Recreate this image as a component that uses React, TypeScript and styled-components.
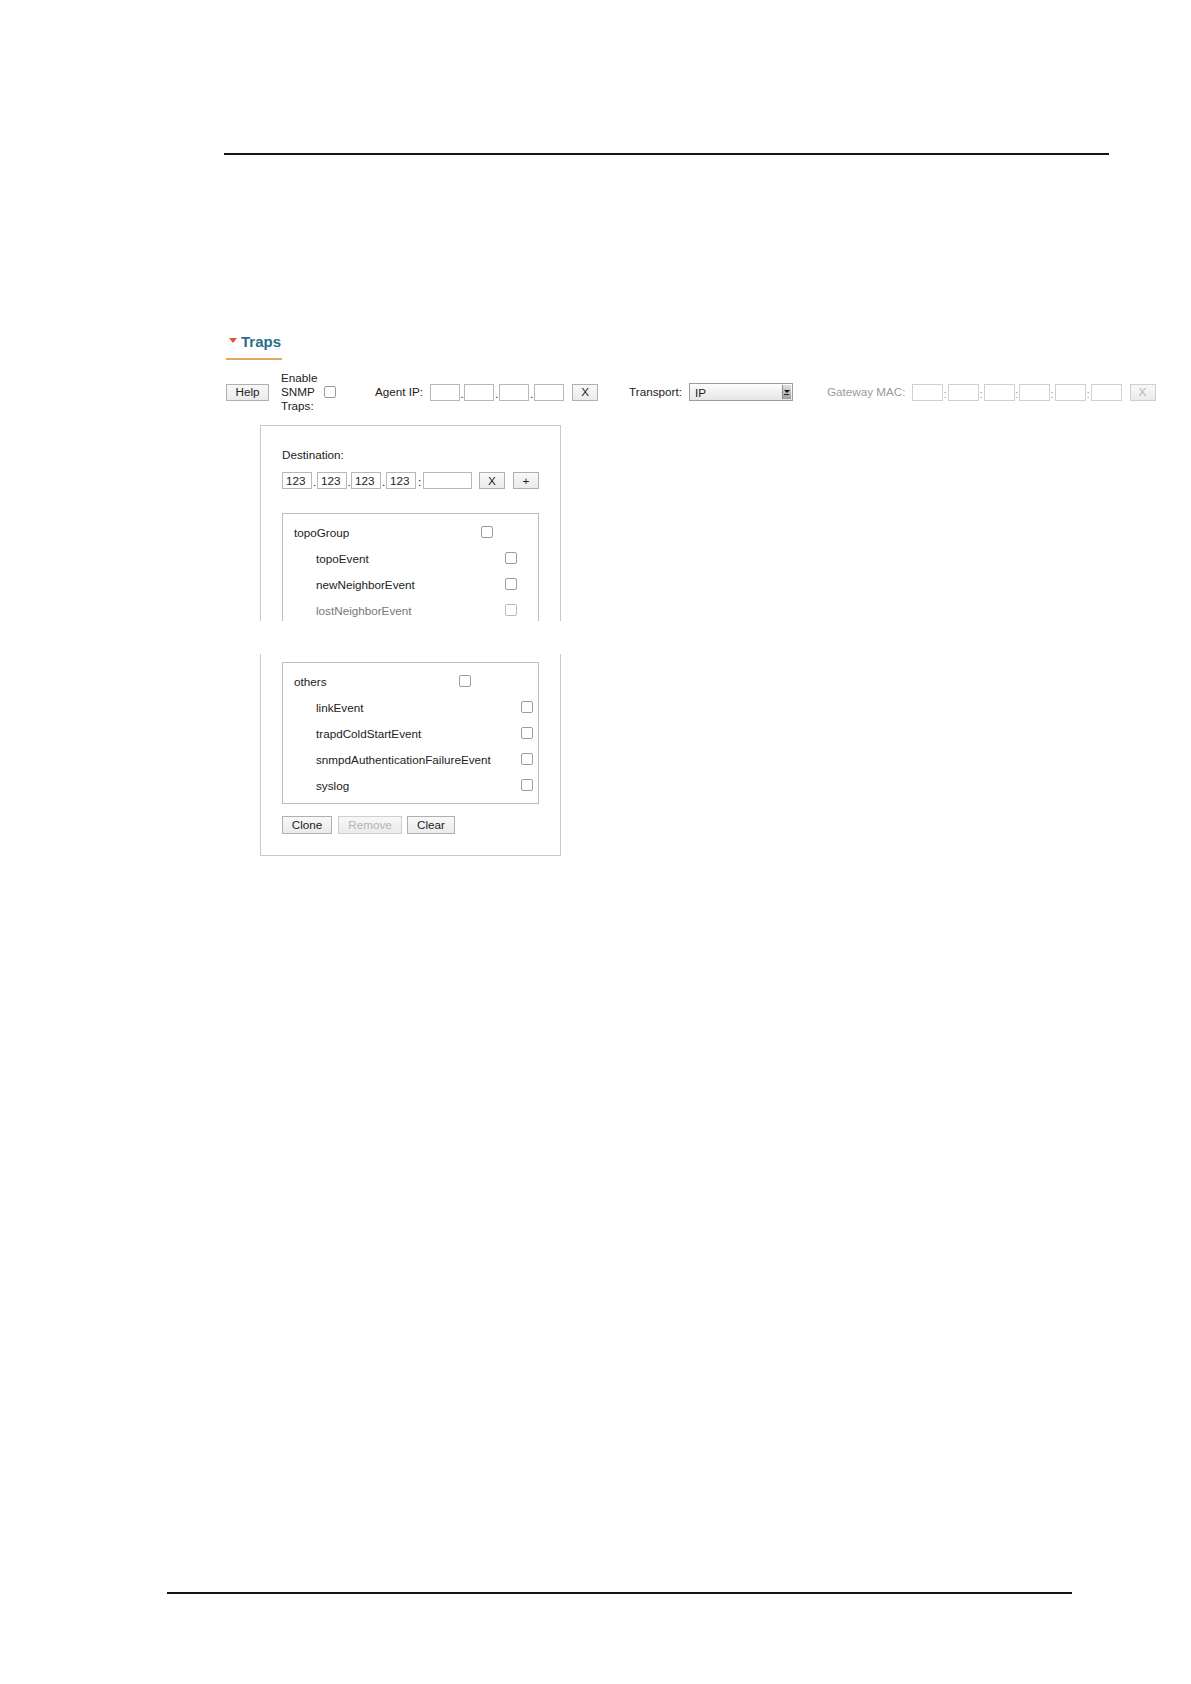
import styled, { createGlobalStyle } from "styled-components";

const GlobalStyle = createGlobalStyle`
  body {
    margin: 0;
    background: #fff;
    font-family: "Liberation Sans", Arial, sans-serif;
    color: #222;
  }
`;

const Page = styled.div`
  width: 1191px;
  height: 1684px;
  display: flex;
  flex-direction: column;
  overflow: hidden;
`;

const Rule = styled.div<{ $left: number; $width: number }>`
  margin-left: ${(p) => p.$left}px;
  width: ${(p) => p.$width}px;
  height: 2px;
  background: #151515;
`;

const TopRule = styled(Rule)`
  margin-top: 153px;
`;

const BottomRule = styled(Rule)`
  margin-top: auto;
  margin-bottom: 90px;
`;

const Section = styled.section`
  margin: 178px 0 0 226px;
  display: flex;
  flex-direction: column;
  align-items: flex-start;
  font-size: 11.7px;
`;

const Heading = styled.h3`
  margin: 0;
  display: flex;
  align-items: center;
  gap: 4px;
  width: 53px;
  padding: 0 0 7px 3px;
  border-bottom: 2px solid #e3a868;
  font-size: 15px;
  line-height: 18px;
  font-weight: bold;
  color: #2c6e88;
`;

const Caret = styled.span`
  width: 0;
  height: 0;
  margin-top: -3px;
  border-left: 4px solid transparent;
  border-right: 4px solid transparent;
  border-top: 5px solid #e2552e;
`;

const Toolbar = styled.div`
  margin-top: 11px;
  display: flex;
  align-items: center;
`;

const Group = styled.div<{ $ml?: number }>`
  display: flex;
  align-items: center;
  margin-left: ${(p) => p.$ml ?? 0}px;
`;

const Label = styled.span<{ $muted?: boolean }>`
  white-space: nowrap;
  line-height: 14px;
  color: ${(p) => (p.$muted ? "#9a9a9a" : "#222")};
`;

const EnableLabel = styled.span`
  width: 40px;
  line-height: 14px;
`;

const Button = styled.button<{ $w: number; $ml?: number; $muted?: boolean; $h?: number }>`
  width: ${(p) => p.$w}px;
  height: ${(p) => p.$h ?? 18}px;
  margin: 0 0 0 ${(p) => p.$ml ?? 0}px;
  padding: 0;
  border: 1px solid ${(p) => (p.$muted ? "#cfcfcf" : "#b0b0b0")};
  border-radius: 0;
  background: linear-gradient(#f8f8f8, #ebebeb);
  font-family: "Liberation Sans", Arial, sans-serif;
  font-size: 11.7px;
  line-height: 14px;
  color: ${(p) => (p.$muted ? "#b4b4b4" : "#222")};
`;

const Check = styled.input.attrs({ type: "checkbox" })<{ $ml?: number; $faded?: boolean }>`
  appearance: none;
  width: 12px;
  height: 12px;
  margin: 0 0 0 ${(p) => p.$ml ?? 0}px;
  border: 1px solid ${(p) => (p.$faded ? "#bcbcbc" : "#9c9c9c")};
  border-radius: 2px;
  background: #fff;
  flex: none;
`;

const Field = styled.input<{ $w: number; $muted?: boolean }>`
  width: ${(p) => p.$w}px;
  height: 17px;
  box-sizing: border-box;
  margin: 0;
  padding: 0 3px;
  border: 1px solid ${(p) => (p.$muted ? "#d0d0d0" : "#b8b8b8")};
  border-radius: 0;
  background: #fff;
  font-family: "Liberation Sans", Arial, sans-serif;
  font-size: 11.7px;
  color: #222;
`;

const Sep = styled.span<{ $w: number; $muted?: boolean }>`
  width: ${(p) => p.$w}px;
  text-align: center;
  align-self: flex-end;
  line-height: 14px;
  color: ${(p) => (p.$muted ? "#999" : "#222")};
`;

const SelectBox = styled.div`
  margin-left: 7px;
  width: 104px;
  height: 18px;
  box-sizing: border-box;
  display: flex;
  align-items: center;
  justify-content: space-between;
  padding: 0 1px 0 5px;
  border: 1px solid #9c9c9c;
  background: linear-gradient(#fdfdfd, #e6e6e6);
`;

const ArrowBox = styled.span`
  width: 9px;
  height: 14px;
  box-sizing: border-box;
  display: flex;
  flex-direction: column;
  align-items: center;
  justify-content: center;
  gap: 1px;
  background: linear-gradient(#e2e2e2, #9d9d9d);
  border-left: 1px solid #8a8a8a;
  &::before {
    content: "";
    border-left: 3px solid transparent;
    border-right: 3px solid transparent;
    border-top: 3px solid #111;
  }
  &::after {
    content: "";
    width: 5px;
    height: 1px;
    background: #222;
  }
`;

const PanelPart = styled.div<{ $part: "top" | "bottom" }>`
  margin-left: 34px;
  width: 301px;
  box-sizing: border-box;
  border: 1px solid #c8c8c8;
  ${(p) =>
    p.$part === "top"
      ? "border-bottom: none; height: 196px; overflow: hidden; padding: 22px 0 0 21px; margin-top: 12px;"
      : "border-top: none; padding: 8px 0 21px 21px; margin-top: 33px;"}
`;

const Row = styled.div<{ $mt?: number }>`
  display: flex;
  align-items: center;
  margin-top: ${(p) => p.$mt ?? 0}px;
`;

const GroupBox = styled.div<{ $mt?: number; $cut?: boolean }>`
  width: 257px;
  box-sizing: border-box;
  margin-top: ${(p) => p.$mt ?? 0}px;
  padding: 5px 0 5px 0;
  border: 1px solid #bdbdbd;
  ${(p) => (p.$cut ? "border-bottom: none;" : "")}
`;

const EventRow = styled.div<{ $indent: number; $faded?: boolean }>`
  display: flex;
  align-items: center;
  height: 26px;
  padding-left: ${(p) => p.$indent}px;
  color: ${(p) => (p.$faded ? "#777" : "#222")};
`;

const EventName = styled.span<{ $w: number }>`
  width: ${(p) => p.$w}px;
`;

const ButtonRow = styled.div`
  display: flex;
  margin-top: 12px;
`;

interface IGroup {
  name: string;
  headerWidth: number;
  itemWidth: number;
  events: string[];
  faded?: string[];
}

const groups: IGroup[] = [
  {
    name: "topoGroup",
    headerWidth: 187,
    itemWidth: 189,
    events: ["topoEvent", "newNeighborEvent", "lostNeighborEvent"],
    faded: ["lostNeighborEvent"],
  },
  {
    name: "others",
    headerWidth: 165,
    itemWidth: 205,
    events: [
      "linkEvent",
      "trapdColdStartEvent",
      "snmpdAuthenticationFailureEvent",
      "syslog",
    ],
  },
];

const EventGroup: React.FC<{ group: IGroup; cut?: boolean; mt?: number }> = ({
  group,
  cut,
  mt,
}) => (
  <GroupBox $cut={cut} $mt={mt}>
    <EventRow $indent={11}>
      <EventName $w={group.headerWidth}>{group.name}</EventName>
      <Check />
    </EventRow>
    {group.events.map((ev) => {
      const faded = group.faded?.includes(ev);
      return (
        <EventRow key={ev} $indent={33} $faded={faded}>
          <EventName $w={group.itemWidth}>{ev}</EventName>
          <Check $faded={faded} />
        </EventRow>
      );
    })}
  </GroupBox>
);

const Octets: React.FC<{
  values: string[];
  sep: string;
  seps: number[];
  w: number;
  muted?: boolean;
}> = ({ values, sep, seps, w, muted }) => (
  <>
    {values.map((v, i) => (
      <span key={i} style={{ display: "contents" }}>
        {i > 0 && (
          <Sep $w={seps[i - 1]} $muted={muted}>
            {sep}
          </Sep>
        )}
        <Field $w={w} $muted={muted} defaultValue={v} disabled={muted} />
      </span>
    ))}
  </>
);

export default function App() {
  return (
    <Page>
      <GlobalStyle />
      <TopRule $left={224} $width={885} />
      <Section>
        <Heading>
          <Caret />
          Traps
        </Heading>

        <Toolbar>
          <Button $w={43} $h={17}>
            Help
          </Button>
          <Group $ml={12}>
            <EnableLabel>Enable SNMP Traps:</EnableLabel>
            <Check $ml={3} />
          </Group>
          <Group $ml={39}>
            <Label>Agent IP:</Label>
            <Group $ml={7}>
              <Octets values={["", "", "", ""]} sep="." seps={[4, 5, 5]} w={30} />
            </Group>
            <Button $w={26} $ml={8} $h={17}>
              X
            </Button>
          </Group>
          <Group $ml={31}>
            <Label>Transport:</Label>
            <SelectBox>
              <span>IP</span>
              <ArrowBox />
            </SelectBox>
          </Group>
          <Group $ml={34}>
            <Label $muted>Gateway MAC:</Label>
            <Group $ml={6}>
              <Octets
                values={["", "", "", "", "", ""]}
                sep=":"
                seps={[5, 5, 4, 5, 5]}
                w={31}
                muted
              />
            </Group>
            <Button $w={26} $ml={8} $h={17} $muted>
              X
            </Button>
          </Group>
        </Toolbar>

        <PanelPart $part="top">
          <Label>Destination:</Label>
          <Row $mt={10}>
            <Octets
              values={["123", "123", "123", "123"]}
              sep="."
              seps={[5, 4, 5]}
              w={30}
            />
            <Sep $w={7}>:</Sep>
            <Field $w={49} />
            <Button $w={26} $ml={7} $h={17}>
              X
            </Button>
            <Button $w={26} $ml={8} $h={17}>
              +
            </Button>
          </Row>
          <EventGroup group={groups[0]} cut mt={24} />
        </PanelPart>

        <PanelPart $part="bottom">
          <EventGroup group={groups[1]} />
          <ButtonRow>
            <Button $w={50}>Clone</Button>
            <Button $w={64} $ml={6} $muted>
              Remove
            </Button>
            <Button $w={48} $ml={5}>
              Clear
            </Button>
          </ButtonRow>
        </PanelPart>
      </Section>
      <BottomRule $left={167} $width={905} />
    </Page>
  );
}
